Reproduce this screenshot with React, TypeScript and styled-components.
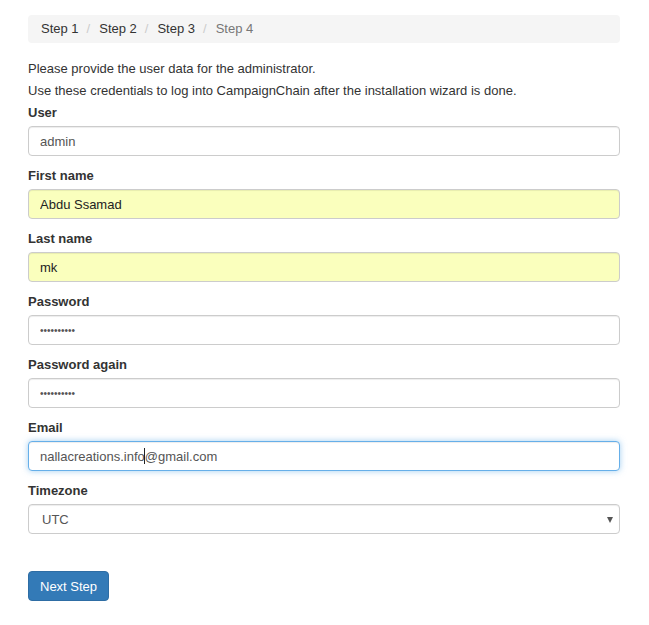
import React from "react";
import styled, { createGlobalStyle } from "styled-components";

const GlobalStyle = createGlobalStyle`
  html, body {
    margin: 0;
    padding: 0;
    background: #fff;
  }
  body {
    font-family: "Liberation Sans", Arial, sans-serif;
    font-size: 13px;
    line-height: 20px;
    color: #333;
  }
  * {
    box-sizing: border-box;
  }
`;

const Page = styled.div`
  width: 592px;
  margin-left: 28px;
  padding-top: 15px;
`;

const Breadcrumb = styled.ol`
  display: flex;
  list-style: none;
  margin: 0 0 16px;
  padding: 4px 13px;
  background: #f5f5f5;
  border-radius: 4px;
`;

const Crumb = styled.li<{ $active?: boolean }>`
  color: ${(p) => (p.$active ? "#777" : "#333")};

  &:not(:first-child)::before {
    content: "/";
    color: #ccc;
    padding: 0 9px 0 8px;
  }
`;

const IntroBlock = styled.div`
  margin-bottom: 1px;
`;

const Intro = styled.p`
  margin: 0 0 2px;
`;

const FormGroup = styled.div`
  margin-bottom: 10px;
`;

const Label = styled.label`
  display: block;
  font-weight: bold;
  margin-bottom: 3px;
`;

const FieldWrap = styled.div`
  position: relative;
`;

const Input = styled.input<{ $autofill?: boolean; $focus?: boolean }>`
  display: block;
  width: 100%;
  height: 30px;
  padding: 5px 11px;
  font-family: inherit;
  font-size: 13px;
  color: ${(p) => (p.$autofill ? "#222" : "#555")};
  background: ${(p) => (p.$autofill ? "#faffbd" : "#fff")};
  border: 1px solid ${(p) => (p.$focus ? "#66afe9" : "#ccc")};
  border-radius: 4px;
  outline: none;
  box-shadow: ${(p) =>
    p.$focus
      ? "inset 0 1px 1px rgba(0,0,0,.075), 0 0 6px rgba(102,175,233,.6)"
      : "inset 0 1px 1px rgba(0,0,0,.075)"};

  &[type="password"] {
    font-size: 10px;
  }
`;

const Caret = styled.span`
  position: absolute;
  left: 116px;
  top: 7px;
  width: 1px;
  height: 16px;
  background: #222;
`;

const Select = styled.select`
  display: block;
  width: 100%;
  height: 30px;
  padding: 4px 13px;
  font-family: inherit;
  font-size: 13px;
  color: #555;
  background: #fff;
  border: 1px solid #ccc;
  border-radius: 4px;
  appearance: none;
  outline: none;
  box-shadow: inset 0 1px 1px rgba(0,0,0,.075);
`;

const SelectArrow = styled.span`
  position: absolute;
  right: 7px;
  top: 13px;
  width: 0;
  height: 0;
  border-left: 3.5px solid transparent;
  border-right: 3.5px solid transparent;
  border-top: 6px solid #555;
  pointer-events: none;
`;

const Actions = styled.div`
  margin-top: 37px;
`;

const Button = styled.button`
  height: 30px;
  padding: 0 11px;
  font-family: inherit;
  font-size: 13px;
  font-weight: normal;
  color: #fff;
  background: #337ab7;
  border: 1px solid #2e6da4;
  border-radius: 4px;
  cursor: pointer;
`;

export default function App() {
  return (
    <>
      <GlobalStyle />
      <Page>
        <Breadcrumb>
          <Crumb>Step 1</Crumb>
          <Crumb>Step 2</Crumb>
          <Crumb>Step 3</Crumb>
          <Crumb $active>Step 4</Crumb>
        </Breadcrumb>

        <IntroBlock>
          <Intro>Please provide the user data for the administrator.</Intro>
          <Intro>Use these credentials to log into CampaignChain after the installation wizard is done.</Intro>
        </IntroBlock>

        <FormGroup>
          <Label>User</Label>
          <Input type="text" defaultValue="admin" readOnly />
        </FormGroup>
        <FormGroup>
          <Label>First name</Label>
          <Input type="text" defaultValue="Abdu Ssamad" $autofill readOnly />
        </FormGroup>
        <FormGroup>
          <Label>Last name</Label>
          <Input type="text" defaultValue="mk" $autofill readOnly />
        </FormGroup>
        <FormGroup>
          <Label>Password</Label>
          <Input type="password" defaultValue="1234567890" readOnly />
        </FormGroup>
        <FormGroup>
          <Label>Password again</Label>
          <Input type="password" defaultValue="1234567890" readOnly />
        </FormGroup>
        <FormGroup>
          <Label>Email</Label>
          <FieldWrap>
            <Input type="text" defaultValue="nallacreations.info@gmail.com" $focus readOnly />
            <Caret />
          </FieldWrap>
        </FormGroup>
        <FormGroup>
          <Label>Timezone</Label>
          <FieldWrap>
            <Select defaultValue="UTC">
              <option value="UTC">UTC</option>
            </Select>
            <SelectArrow />
          </FieldWrap>
        </FormGroup>

        <Actions>
          <Button type="button">Next Step</Button>
        </Actions>
      </Page>
    </>
  );
}
